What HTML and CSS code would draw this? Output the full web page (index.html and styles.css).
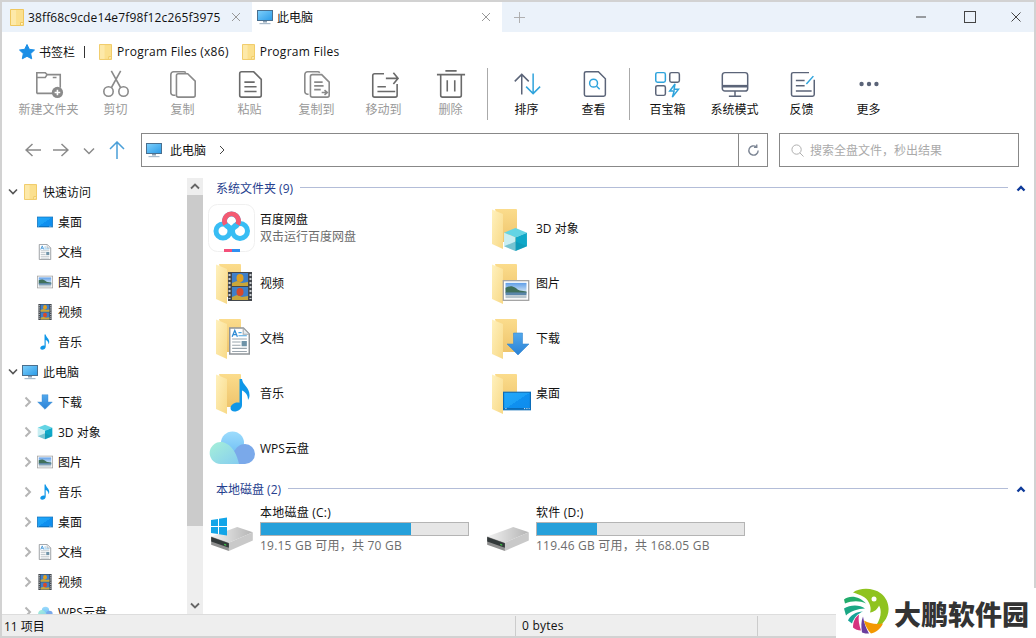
FILE: index.html
```html
<!DOCTYPE html>
<html lang="en">
<head>
    <meta charset="UTF-8">
    <meta name="viewport" content="width=device-width, initial-scale=1.0">
    <title>此电脑</title>
    <link rel="stylesheet" href="styles.css">
</head>
<body>
    <!-- shared icons -->
    <svg class="sprite" xmlns="http://www.w3.org/2000/svg">
        <defs>
            <linearGradient id="g-back" x1="0" y1="0" x2="0" y2="1"><stop offset="0" stop-color="#fbdc8c"/><stop offset="1" stop-color="#eec46c"/></linearGradient>
            <linearGradient id="g-leaf" x1="0" y1="0" x2="1" y2="1"><stop offset="0" stop-color="#fff1bd"/><stop offset="1" stop-color="#f8d987"/></linearGradient>
            <linearGradient id="g-screen" x1="0" y1="0" x2="1" y2="1"><stop offset="0" stop-color="#7fd0fb"/><stop offset="1" stop-color="#2a9be8"/></linearGradient>
            <linearGradient id="g-desk" x1="0" y1="0" x2="1" y2="1"><stop offset="0" stop-color="#22a8fb"/><stop offset=".5" stop-color="#1ba0f6"/><stop offset=".5" stop-color="#0f90f0"/><stop offset="1" stop-color="#0e8cec"/></linearGradient>
            <linearGradient id="g-sky" x1="0" y1="0" x2="0" y2="1"><stop offset="0" stop-color="#5f9ee8"/><stop offset="1" stop-color="#d5e6f4"/></linearGradient>
            <linearGradient id="g-arrow" x1="0" y1="0" x2="0" y2="1"><stop offset="0" stop-color="#52a8ec"/><stop offset="1" stop-color="#2a82d6"/></linearGradient>
            <linearGradient id="g-cloud" x1="0" y1="0" x2="1" y2="1"><stop offset="0" stop-color="#a6f0d8"/><stop offset="1" stop-color="#86cdf0"/></linearGradient>
            <linearGradient id="g-dome" x1="0" y1="0" x2="0" y2="1"><stop offset="0" stop-color="#9ddcfc"/><stop offset="1" stop-color="#6fbff5"/></linearGradient>
            <linearGradient id="g-disk" x1="0" y1="0" x2="1" y2="0"><stop offset="0" stop-color="#f2f2f2"/><stop offset="1" stop-color="#b4b4b4"/></linearGradient>
        </defs>

        <symbol id="i-folder" viewBox="0 0 14 17">
            <path d="M.5.5h13v16H.5z" fill="#fbe08e" stroke="#efc75e"/>
            <path d="M10.500 16.500v-3h3" fill="#fff3c4" stroke="#efc75e"/>
            <path d="M1 1h5v15H1z" fill="#fde9a9"/>
        </symbol>
        <symbol id="i-pc" viewBox="0 0 16 16">
            <rect x=".5" y="1.500" width="15" height="10" fill="url(#g-screen)" stroke="#4a6f8e"/>
            <path d="M6 12h4v1.500H6z" fill="#8b9eb0"/>
            <path d="M2.500 14h11v1.200h-11z" fill="#a9bbcb"/>
        </symbol>
        <symbol id="i-desk" viewBox="0 0 24 16">
            <rect x=".5" y=".5" width="23" height="15" fill="url(#g-desk)" stroke="#0b6cb8"/>
            <path d="M1 14h22v1H1z" fill="#0b6cb8"/>
            <path d="M2 14.500h1M18 14.500h1M20 14.500h1M22 14.500h.8" stroke="#fff" stroke-width=".7"/>
        </symbol>
        <symbol id="i-doc" viewBox="0 0 20 26">
            <path d="M.7.7h13l5.600 5.600v19H.7z" fill="#fff" stroke="#8f9498" stroke-width="1.400"/>
            <path d="M13.500 1v5.500h5.500" fill="#e7ecef" stroke="#a4a9ad"/>
            <path d="M3 9l2.500-6L8 9M4 7h3" fill="none" stroke="#2d8ad4" stroke-width="1.200"/>
            <path d="M9 5h3M9 8h8" stroke="#4aa3dd"/>
            <path d="M3 11h14M3 14h8M3 17h8M3 20h14M3 23h14" stroke="#9aa5ad"/>
            <rect x="12" y="13" width="5" height="5" fill="#6f93a8"/>
        </symbol>
        <symbol id="i-pic" viewBox="0 0 28 22">
            <rect x=".7" y=".7" width="26.600" height="20.600" fill="#fff" stroke="#a5a5a5" stroke-width="1.400"/>
            <rect x="3" y="3" width="22" height="10" fill="url(#g-sky)"/>
            <path d="M3 8c3-1 5-2 8-1 3 .5 4 3 7 4l7 1v2H3z" fill="#3f6f5a"/>
            <rect x="3" y="13" width="22" height="3" fill="#5a86aa"/>
            <rect x="3" y="16" width="22" height="3" fill="#b9c6cd"/>
        </symbol>
        <symbol id="i-film" viewBox="0 0 24 29">
            <rect width="24" height="29" fill="#43474c"/>
            <path d="M1.500 2v25M22.500 2v25" stroke="#c9cdd0" stroke-width="2" stroke-dasharray="2 2"/>
            <rect x="4" y="1" width="16" height="13" fill="#3f7fc8"/>
            <rect x="4" y="15" width="16" height="13" fill="#3f7fc8"/>
            <path d="M4 14v-3l5-2 5 2 6-1v4zM4 28v-3l5-2 5 2 6-1v4z" fill="#c9a63a"/>
            <ellipse cx="12" cy="6" rx="3.500" ry="4" fill="#e0a020"/>
            <ellipse cx="12" cy="20" rx="3.500" ry="4" fill="#d84a2a"/>
        </symbol>
        <symbol id="i-music" viewBox="0 0 20 34">
            <path d="M9 1h2.500c.5 6 7.500 8 7.500 16 0 2-.5 3.500-1.500 5 .2-5-3-8.500-6-9.500V27c0 4-4 6.500-7.500 6.500C1.500 33.500 0 32 0 30c0-3 3.500-5.500 7-5.500.7 0 1.400.1 2 .3z" fill="#0f97e8"/>
        </symbol>
        <symbol id="i-down" viewBox="0 0 24 24">
            <path d="M7.500 1h9v11H23L12 23 1 12h6.500z" fill="url(#g-arrow)" stroke="#3a8ad0" stroke-width=".6"/>
        </symbol>
        <symbol id="i-cube" viewBox="0 0 24 24">
            <path d="M12 1l11 4.500L12 10 1 5.500z" fill="#63d4e4"/>
            <path d="M1 5.500L12 10v13L1 18.500z" fill="#c9eef2"/>
            <path d="M23 5.500L12 10v13l11-4.500z" fill="#0fa8c8"/>
            <path d="M1 18.500L12 14l11 4.500L12 23z" fill="#0f8fa8" opacity=".45"/>
        </symbol>
        <symbol id="i-drive" viewBox="0 0 40 24">
            <path d="M0 9L25 0l15 5-23 10z" fill="url(#g-disk)"/>
            <path d="M17 15L40 5v8L17 23z" fill="#c9c9c9"/>
            <path d="M0 9l17 6v8L0 17z" fill="#8f8f8f"/>
            <path d="M0 9.500l17 6v4.500L0 14z" fill="#33393a"/>
            <path d="M12.500 16l2 .7v1.200l-2-.7z" fill="#3ed04a"/>
        </symbol>
        <symbol id="i-chev" viewBox="0 0 8 12">
            <path d="M1.500 1.500L6 6l-4.500 4.500" fill="none" stroke="#b5b5b5" stroke-width="2"/>
        </symbol>
        <symbol id="i-open" viewBox="0 0 10 8">
            <path d="M1 1.500L5 5.500 9 1.500" fill="none" stroke="#555" stroke-width="1.600"/>
        </symbol>
        <symbol id="i-fold-up" viewBox="0 0 10 8">
            <path d="M1.500 6.500L5 3 8.500 6.500" fill="none" stroke="#0e3a9a" stroke-width="2.400"/>
        </symbol>
        <symbol id="i-big-folder" viewBox="0 0 48 48">
            <path d="M12 5h21a1 1 0 0 1 1 1v32H20z" fill="url(#g-back)"/>
            <path d="M9 5.500L20 10v35L9 40z" fill="url(#g-leaf)"/>
        </symbol>
        <symbol id="i-wps" viewBox="0 0 48 50">
            <circle cx="25.500" cy="20" r="11.500" fill="url(#g-dome)"/>
            <path d="M14 41h24a10 10 0 0 0 0-20c-5 0-8 3-10 6z" fill="#7aa9ea"/>
            <path d="M14 41a11 11 0 1 1 6-20c6 3 10 11 12 20z" fill="url(#g-cloud)"/>
        </symbol>
    </svg>

    <div class="window">
        <div class="tabbar">
            <div class="tab">
                <svg class="tab-icon"><use href="#i-folder"/></svg>
                <span class="tab-name">38ff68c9cde14e7f98f12c265f3975</span>
                <svg class="tab-close" viewBox="0 0 10 10"><path d="M1 1l8 8M9 1l-8 8"/></svg>
            </div>
            <div class="tab active">
                <svg class="tab-icon"><use href="#i-pc"/></svg>
                <span class="tab-name">此电脑</span>
                <svg class="tab-close" viewBox="0 0 10 10"><path d="M1 1l8 8M9 1l-8 8"/></svg>
            </div>
            <svg class="tab-add" viewBox="0 0 12 12"><path d="M6 0v12M0 6h12"/></svg>
            <div class="win-btns">
                <svg viewBox="0 0 12 12"><path d="M1 6h10"/></svg>
                <svg viewBox="0 0 12 12"><rect x=".5" y=".5" width="11" height="11"/></svg>
                <svg viewBox="0 0 12 12"><path d="M1.500 1.500l9 9M10.500 1.500l-9 9"/></svg>
            </div>
        </div>

        <div class="bookmarks">
            <svg class="star" viewBox="0 0 16 16"><path d="M8 .5l2.300 4.800 5.200.7-3.800 3.600 1 5.200L8 12.300l-4.700 2.500 1-5.200L.5 6l5.200-.7z" fill="#1c8fe6" stroke="#1c8fe6" stroke-linejoin="round"/></svg>
            <span class="mark-title">书签栏</span>
            <span class="mark-sep"></span>
            <svg class="mark-folder"><use href="#i-folder"/></svg>
            <span class="mark-name">Program Files (x86)</span>
            <svg class="mark-folder"><use href="#i-folder"/></svg>
            <span class="mark-name">Program Files</span>
        </div>

        <div class="toolbar">
            <div class="tool off">
                <svg viewBox="0 0 32 32"><path d="M3 26V4h9l2 2h14v14M3 26h17M3 9h9l2-3M20 9h4"/><circle cx="25" cy="25" r="6" fill="#8a8a8a" stroke="none"/><path d="M25 22v6M22 25h6" stroke="#fff"/></svg>
                <span>新建文件夹</span>
            </div>
            <div class="tool off">
                <svg viewBox="0 0 32 32"><circle cx="8" cy="24" r="5"/><circle cx="24" cy="24" r="5"/><path d="M11 20L21 2M21 20L11 2"/></svg>
                <span>剪切</span>
            </div>
            <div class="tool off">
                <svg viewBox="0 0 32 32"><path d="M8 28H6a3 3 0 0 1-3-3V6a3 3 0 0 1 3-3h11a3 3 0 0 1 2 1"/><path d="M11 5h10l8 8v15a2 2 0 0 1-2 2H11a2 2 0 0 1-2-2V7a2 2 0 0 1 2-2z"/></svg>
                <span>复制</span>
            </div>
            <div class="tool off dark">
                <svg viewBox="0 0 32 32"><path d="M7 3h13l8 8v17a2 2 0 0 1-2 2H7a2 2 0 0 1-2-2V5a2 2 0 0 1 2-2z"/><path d="M10 14h11M10 19h13M10 24h13"/></svg>
                <span>粘贴</span>
            </div>
            <div class="tool off">
                <svg viewBox="0 0 32 32"><path d="M7 27H6a3 3 0 0 1-3-3V6a3 3 0 0 1 3-3h11a3 3 0 0 1 2 1"/><path d="M11 6h10l8 8v14a2 2 0 0 1-2 2H11a2 2 0 0 1-2-2V8a2 2 0 0 1 2-2z"/><path d="M13 14h9M13 18h10M13 22h7M21 25h5M24 22.500l3 2.500-3 2.500"/></svg>
                <span>复制到</span>
            </div>
            <div class="tool off dark">
                <svg viewBox="0 0 32 32"><path d="M16 5H6a2 2 0 0 0-2 2v21a2 2 0 0 0 2 2h22a2 2 0 0 0 2-2V16"/><path d="M9 19h9M9 24h19M18 10h13M26 4l5 6-5 6"/></svg>
                <span>移动到</span>
            </div>
            <div class="tool off dark">
                <svg viewBox="0 0 32 32"><path d="M1 6h30M10 2h12M5 6v22a2 2 0 0 0 2 2h18a2 2 0 0 0 2-2V6M12 12v12M20 12v12"/></svg>
                <span>删除</span>
            </div>
            <div class="tool-sep"></div>
            <div class="tool">
                <svg viewBox="0 0 32 32"><path d="M10 28V6M2 13l8-8 8 8"/><path d="M23 4v22M15 19l8 8 8-8" stroke="#2ea3dc"/></svg>
                <span>排序</span>
            </div>
            <div class="tool">
                <svg viewBox="0 0 32 32"><path d="M7 2h14l8 8v18a2 2 0 0 1-2 2H7a2 2 0 0 1-2-2V4a2 2 0 0 1 2-2z"/><circle cx="15.500" cy="15" r="4.500" stroke="#2ea3dc"/><path d="M19 18.500l3.500 3.500" stroke="#2ea3dc"/></svg>
                <span>查看</span>
            </div>
            <div class="tool-sep second"></div>
            <div class="tool">
                <svg viewBox="0 0 32 32"><rect x="2" y="3" width="11" height="11" rx="2" stroke="#2ea3dc"/><rect x="18" y="3" width="11" height="11" rx="2"/><rect x="2" y="18" width="11" height="11" rx="2"/><path d="M24 16l-6 8h5l-2 7 7-9h-5z" stroke="#2ea3dc"/></svg>
                <span>百宝箱</span>
            </div>
            <div class="tool">
                <svg viewBox="0 0 32 32"><rect x="1.500" y="3" width="29" height="21" rx="3"/><path d="M2 18.500h28" stroke-width="3"/><path d="M16 24v6M9 30h14"/></svg>
                <span>系统模式</span>
            </div>
            <div class="tool">
                <svg viewBox="0 0 32 32"><path d="M24 3H6a2 2 0 0 0-2 2v23a2 2 0 0 0 2 2h22a2 2 0 0 0 2-2V11"/><path d="M9 12h10M9 18h10M9 24h18"/><path d="M21 16l8-9" stroke="#2ea3dc"/></svg>
                <span>反馈</span>
            </div>
            <div class="tool">
                <svg viewBox="0 0 32 32"><circle cx="7.500" cy="16" r="2.500" class="dot"/><circle cx="16" cy="16" r="2.500" class="dot"/><circle cx="24.500" cy="16" r="2.500" class="dot"/></svg>
                <span>更多</span>
            </div>
        </div>

        <div class="navbar">
            <div class="nav-btns">
                <svg viewBox="0 0 16 14"><path d="M16 7H1M7.500 1L1 7l6.500 6"/></svg>
                <svg viewBox="0 0 16 14"><path d="M0 7h15M8.500 1L15 7l-6.500 6"/></svg>
                <svg class="nav-more" viewBox="0 0 12 8"><path d="M1 1.500L6 6.500 11 1.500"/></svg>
                <svg class="nav-up" viewBox="0 0 16 18"><path d="M8 18V1M1 8l7-7 7 7"/></svg>
            </div>
            <div class="address">
                <svg class="addr-icon"><use href="#i-pc"/></svg>
                <span class="addr-name">此电脑</span>
                <svg class="addr-next" viewBox="0 0 6 10"><path d="M1 1l4 4-4 4"/></svg>
                <div class="addr-refresh">
                    <svg viewBox="0 0 14 14"><path d="M12 7a5 5 0 1 1-2-4"/><path d="M10.500 .5V3.500H7.500"/></svg>
                </div>
            </div>
            <div class="search">
                <svg viewBox="0 0 14 14"><circle cx="6" cy="6" r="5"/><path d="M9.500 9.500L13.500 13.500"/></svg>
                <span>搜索全盘文件，秒出结果</span>
            </div>
        </div>

        <div class="main">
            <div class="tree">
                <div class="tree-row"><svg class="caret-open"><use href="#i-open"/></svg><svg class="tree-icon"><use href="#i-folder" x="2" width="13" height="16"/></svg><span>快速访问</span></div>
                <div class="tree-row child"><span class="caret-gap"></span><svg class="tree-icon"><use href="#i-desk"/></svg><span>桌面</span></div>
                <div class="tree-row child"><span class="caret-gap"></span><svg class="tree-icon"><use href="#i-doc"/></svg><span>文档</span></div>
                <div class="tree-row child"><span class="caret-gap"></span><svg class="tree-icon"><use href="#i-pic"/></svg><span>图片</span></div>
                <div class="tree-row child"><span class="caret-gap"></span><svg class="tree-icon"><use href="#i-film"/></svg><span>视频</span></div>
                <div class="tree-row child"><span class="caret-gap"></span><svg class="tree-icon"><use href="#i-music"/></svg><span>音乐</span></div>
                <div class="tree-row"><svg class="caret-open"><use href="#i-open"/></svg><svg class="tree-icon"><use href="#i-pc"/></svg><span>此电脑</span></div>
                <div class="tree-row child"><svg class="caret"><use href="#i-chev"/></svg><svg class="tree-icon"><use href="#i-down"/></svg><span>下载</span></div>
                <div class="tree-row child"><svg class="caret"><use href="#i-chev"/></svg><svg class="tree-icon"><use href="#i-cube"/></svg><span>3D 对象</span></div>
                <div class="tree-row child"><svg class="caret"><use href="#i-chev"/></svg><svg class="tree-icon"><use href="#i-pic"/></svg><span>图片</span></div>
                <div class="tree-row child"><svg class="caret"><use href="#i-chev"/></svg><svg class="tree-icon"><use href="#i-music"/></svg><span>音乐</span></div>
                <div class="tree-row child"><svg class="caret"><use href="#i-chev"/></svg><svg class="tree-icon"><use href="#i-desk"/></svg><span>桌面</span></div>
                <div class="tree-row child"><svg class="caret"><use href="#i-chev"/></svg><svg class="tree-icon"><use href="#i-doc"/></svg><span>文档</span></div>
                <div class="tree-row child"><svg class="caret"><use href="#i-chev"/></svg><svg class="tree-icon"><use href="#i-film"/></svg><span>视频</span></div>
                <div class="tree-row child"><svg class="caret"><use href="#i-chev"/></svg><svg class="tree-icon"><use href="#i-wps"/></svg><span>WPS云盘</span></div>
            </div>

            <div class="scrollbar">
                <svg class="sb-arrow" viewBox="0 0 10 8"><path d="M1 6l4-4 4 4"/></svg>
                <div class="sb-thumb"></div>
                <svg class="sb-arrow" viewBox="0 0 10 8"><path d="M1 2l4 4 4-4"/></svg>
            </div>

            <div class="content">
                <div class="group-head"><span>系统文件夹 (9)</span><i></i><svg><use href="#i-fold-up"/></svg></div>
                <div class="items">
                    <div class="item">
                        <svg class="item-icon" viewBox="0 0 48 50">
                            <rect x="1.500" y="1.500" width="46" height="47" rx="9" fill="#fff" stroke="#f0f0f0"/>
                            <circle cx="16" cy="28" r="7" fill="none" stroke="#38bdf4" stroke-width="5"/>
                            <circle cx="33" cy="28" r="7.500" fill="none" stroke="#38bdf4" stroke-width="5"/>
                            <circle cx="24.500" cy="18" r="7" fill="none" stroke="#38bdf4" stroke-width="5"/>
                            <path d="M18.500 21.500a7 7 0 1 1 12 0" fill="none" stroke="#f45a72" stroke-width="5"/>
                            <path d="M17 46h8v3h-8z" fill="#f4507a"/>
                            <path d="M25 46h8v3h-8z" fill="#2f8ff0"/>
                        </svg>
                        <div class="item-text two"><span>百度网盘</span><span class="sub">双击运行百度网盘</span></div>
                    </div>
                    <div class="item">
                        <svg class="item-icon" viewBox="0 0 48 50"><use href="#i-big-folder" y="1" width="48" height="48"/><use href="#i-cube" x="20" y="24" width="25" height="25"/></svg>
                        <div class="item-text"><span>3D 对象</span></div>
                    </div>
                    <div class="item">
                        <svg class="item-icon" viewBox="0 0 48 50"><use href="#i-big-folder" y="1" width="48" height="48"/><use href="#i-film" x="21" y="14" width="24" height="29"/></svg>
                        <div class="item-text"><span>视频</span></div>
                    </div>
                    <div class="item">
                        <svg class="item-icon" viewBox="0 0 48 50"><use href="#i-big-folder" y="1" width="48" height="48"/><use href="#i-pic" x="19" y="22" width="28" height="21"/></svg>
                        <div class="item-text"><span>图片</span></div>
                    </div>
                    <div class="item">
                        <svg class="item-icon" viewBox="0 0 48 50"><use href="#i-big-folder" y="1" width="48" height="48"/><use href="#i-doc" x="22" y="14" width="21" height="28"/></svg>
                        <div class="item-text"><span>文档</span></div>
                    </div>
                    <div class="item">
                        <svg class="item-icon" viewBox="0 0 48 50"><use href="#i-big-folder" y="1" width="48" height="48"/><use href="#i-down" x="23" y="19" width="24" height="24"/></svg>
                        <div class="item-text"><span>下载</span></div>
                    </div>
                    <div class="item">
                        <svg class="item-icon" viewBox="0 0 48 50"><use href="#i-big-folder" y="1" width="48" height="48"/><use href="#i-music" x="23" y="10" width="21" height="34"/></svg>
                        <div class="item-text"><span>音乐</span></div>
                    </div>
                    <div class="item">
                        <svg class="item-icon" viewBox="0 0 48 50"><use href="#i-big-folder" y="1" width="48" height="48"/><use href="#i-desk" x="20" y="23" width="28" height="20"/></svg>
                        <div class="item-text"><span>桌面</span></div>
                    </div>
                    <div class="item">
                        <svg class="item-icon" viewBox="0 0 48 50"><use href="#i-wps"/></svg>
                        <div class="item-text"><span>WPS云盘</span></div>
                    </div>
                </div>

                <div class="group-head second"><span>本地磁盘 (2)</span><i></i><svg><use href="#i-fold-up"/></svg></div>
                <div class="items">
                    <div class="drive">
                        <svg class="item-icon" viewBox="0 0 48 50">
                            <use href="#i-drive" x="4" y="23" width="42" height="25"/>
                            <path d="M4 16l7-1v7H4zM12 14.800l8-1.300v8.500h-8zM4 23h7v7l-7-1zM12 23h8v8.500l-8-1.300z" fill="#12a5e8"/>
                        </svg>
                        <div class="drive-text">
                            <span>本地磁盘 (C:)</span>
                            <div class="meter"><div class="meter-fill" style="width: 72.6%"></div></div>
                            <span class="sub">19.15 GB 可用，共 70 GB</span>
                        </div>
                    </div>
                    <div class="drive">
                        <svg class="item-icon" viewBox="0 0 48 50"><use href="#i-drive" x="4" y="23" width="42" height="25"/></svg>
                        <div class="drive-text">
                            <span>软件 (D:)</span>
                            <div class="meter"><div class="meter-fill" style="width: 28.9%"></div></div>
                            <span class="sub">119.46 GB 可用，共 168.05 GB</span>
                        </div>
                    </div>
                </div>
            </div>
        </div>

        <div class="statusbar">
            <span class="st-count">11 项目</span>
            <span class="st-size">0 bytes</span>
            <span class="st-rest"></span>
        </div>
    </div>

    <div class="watermark">
        <svg viewBox="7 3.500 47 50">
            <path d="M17 8C24 3 37 3 45 9C54 16 55 29 48 37C46 40 43 41 40 41C45 34 46 26 43 21C42 24 38 28 34 28C36 23 33 15 27 12C24 10 20 9 17 8Z" fill="#8fc31f"/>
            <circle cx="38" cy="14.500" r="2.500" fill="#fff"/>
            <path d="M8 15C14 10 24 12 30 19C24 16 16 16 9 19Z" fill="#22ac6c"/>
            <path d="M8 24C14 20 24 20 29 24C22 24 14 27 10 31Z" fill="#1ba784"/>
            <path d="M12 36C14 31 20 27 27 27C22 29 18 33 16 39Z" fill="#17a398"/>
            <path d="M17 43C17 37 19 33 23 30C22 35 23 40 25 46C22 46 19 45 17 43Z" fill="#d6337f"/>
            <path d="M26 48C25 42 25 37 27 32C28 38 30 44 33 49C31 49 28 49 26 48Z" fill="#6a3e9e"/>
            <path d="M28 36C33 39 40 40 47 39C45 44 40 48 35 49C32 46 29 41 28 36Z" fill="#f39800"/>
        </svg>
        <span>大鹏软件园</span>
    </div>
</body>
</html>
```

FILE: styles.css
```css
* {
    margin: 0;
    padding: 0;
    box-sizing: border-box;
}

html, body {
    height: 100%;
}

body {
    font-family: "Open Sans", "Noto Sans CJK SC", sans-serif;
    font-size: 12px;
    color: #111;
    background: white;
    overflow: hidden;
}

.sprite {
    display: block;
    width: 0;
    height: 0;
    overflow: hidden;
}

.window {
    height: 638px;
    display: flex;
    flex-direction: column;
    border: 2px solid #d2d2d2;
}

/* tabs */
.tabbar {
    height: 30px;
    flex: none;
    display: flex;
    align-items: center;
    background: #ebf2fa;
}

.tab {
    width: 250px;
    height: 30px;
    display: flex;
    align-items: center;
    padding-left: 8px;
}

.tab.active {
    background: white;
    padding-left: 5px;
}

.tab-icon {
    width: 14px;
    height: 17px;
    flex: none;
}

.tab.active .tab-icon {
    width: 16px;
    height: 16px;
    margin-right: 4px;
}

.tab-name {
    margin-left: 4px;
    flex: 1;
    white-space: nowrap;
    letter-spacing: .13px;
}

.tab.active .tab-name {
    margin-left: 0;
    letter-spacing: 0;
}

.tab-close {
    width: 10px;
    height: 10px;
    margin-right: 11px;
    fill: none;
    stroke: #999;
}

.tab-add {
    width: 11px;
    height: 11px;
    margin-left: 12px;
    fill: none;
    stroke: #aaa;
}

.win-btns {
    margin-left: auto;
    display: flex;
    align-items: center;
    gap: 37px;
    padding-right: 12px;
}

.win-btns svg {
    width: 12px;
    height: 12px;
    fill: none;
    stroke: #444;
}

.win-btns svg:last-child {
    margin-left: -3px;
}

/* bookmarks */
.bookmarks {
    height: 36px;
    flex: none;
    display: flex;
    align-items: center;
    padding: 3px 0 0 17px;
}

.star {
    width: 16px;
    height: 16px;
    margin-right: 4px;
}

.mark-title {
    width: 36px;
}

.mark-sep {
    width: 1px;
    height: 12px;
    background: #333;
    margin: 0 14px 0 9px;
}

.mark-folder {
    width: 13px;
    height: 16px;
    margin-right: 5px;
}

.mark-name {
    margin-right: 13px;
    letter-spacing: .27px;
}

/* toolbar */
.toolbar {
    height: 54px;
    flex: none;
    display: flex;
    padding-left: 13px;
}

.tool {
    width: 67px;
    flex: none;
    display: flex;
    flex-direction: column;
    align-items: center;
}

.tool svg {
    width: 28px;
    height: 28px;
    margin-top: 2px;
    fill: none;
    stroke: #5b6478;
    stroke-width: 1.7;
}

.tool .dot {
    fill: #5b6478;
    stroke: none;
}

.tool span {
    margin-top: 2px;
    line-height: 20px;
    white-space: nowrap;
}

.tool.off svg {
    width: 30px;
    height: 30px;
    margin-top: 1px;
    stroke: #8a8a8a;
}

.tool.off.dark svg {
    stroke: #6a6a6a;
}

.tool.off span {
    margin-top: 1px;
    color: #999;
}

.tool-sep {
    width: 1px;
    height: 52px;
    flex: none;
    background: #aaa;
    margin: 0 5px 0 3px;
}

.tool-sep.second {
    margin: 0 4px 0 2px;
}

/* nav + address */
.navbar {
    height: 45px;
    flex: none;
    display: flex;
    align-items: center;
    padding-top: 11px;
}

.nav-btns {
    width: 139px;
    flex: none;
    display: flex;
    align-items: center;
    padding-left: 23px;
}

.nav-btns svg {
    width: 16px;
    height: 14px;
    margin-right: 12px;
    fill: none;
    stroke: #8a8a8a;
    stroke-width: 1.500;
}

.nav-btns .nav-more {
    width: 12px;
    height: 8px;
    margin: 2px 14px 0 2px;
}

.nav-btns .nav-up {
    width: 16px;
    height: 18px;
    stroke: #4a9fd8;
    margin: 0;
}

.address {
    width: 627px;
    height: 34px;
    flex: none;
    display: flex;
    align-items: center;
    border: 1px solid #888;
    padding-left: 4px;
}

.addr-icon {
    width: 16px;
    height: 16px;
    margin-right: 8px;
}

.addr-name {
    width: 36px;
}

.addr-next {
    width: 6px;
    height: 10px;
    margin-left: 13px;
    fill: none;
    stroke: #444;
}

.addr-refresh {
    width: 29px;
    height: 100%;
    margin-left: auto;
    display: flex;
    align-items: center;
    justify-content: center;
    border-left: 1px solid #888;
}

.addr-refresh svg {
    width: 13px;
    height: 13px;
    fill: none;
    stroke: #7c8594;
    stroke-width: 1.500;
}

.search {
    width: 240px;
    height: 34px;
    margin-left: 11px;
    flex: none;
    display: flex;
    align-items: center;
    gap: 6px;
    border: 1px solid #888;
    padding-left: 11px;
    color: #aaa;
}

.search svg {
    width: 13px;
    height: 13px;
    fill: none;
    stroke: #aaa;
}

/* main area */
.main {
    flex: 1;
    min-height: 0;
    display: flex;
    padding-top: 9px;
}

.tree {
    width: 185px;
    flex: none;
    overflow: hidden;
    padding-top: 1px;
}

.tree-row {
    height: 30px;
    display: flex;
    align-items: center;
    padding-left: 6px;
}

.tree-row.child {
    padding-left: 22px;
}

.caret-open {
    width: 10px;
    height: 8px;
    margin-right: 4px;
    flex: none;
}

.caret, .caret-gap {
    width: 8px;
    height: 12px;
    margin-right: 5px;
    flex: none;
}

.tree-icon {
    width: 16px;
    height: 16px;
    margin-right: 5px;
    flex: none;
}

.tree-row span:last-child {
    white-space: nowrap;
}

.scrollbar {
    width: 16px;
    flex: none;
    display: flex;
    flex-direction: column;
    align-items: center;
    margin-top: 2px;
    background: #eee;
}

.sb-arrow {
    width: 10px;
    height: 17px;
    flex: none;
    fill: none;
    stroke: #666;
    stroke-width: 1.800;
}

.sb-thumb {
    width: 100%;
    height: 331px;
    margin-bottom: auto;
    background: #cbcbcb;
}

.content {
    flex: 1;
    min-width: 0;
    padding-left: 4px;
}

.group-head {
    height: 23px;
    margin-bottom: 2px;
    display: flex;
    align-items: center;
    padding: 0 8px 0 9px;
    color: #26408e;
}

.group-head.second {
    margin: 1px 0 0;
}

.group-head i {
    flex: 1;
    height: 1px;
    margin: 0 8px 0 7px;
    background: #b3bdd8;
}

.group-head svg {
    width: 10px;
    height: 8px;
}

.items {
    display: grid;
    grid-template-columns: repeat(2, 276px);
}

.item {
    height: 55px;
    display: flex;
    align-items: center;
    gap: 5px;
}

.item-icon {
    width: 48px;
    height: 50px;
    flex: none;
}

.item .item-icon {
    margin-bottom: 1px;
}

.item-text {
    display: flex;
    flex-direction: column;
    line-height: 17px;
}

.item-text.two {
    margin-bottom: 2px;
}

.sub {
    color: #6d6d6d;
}

.drive {
    height: 52px;
    margin-top: 3px;
    display: flex;
    align-items: center;
    gap: 5px;
}

.drive-text {
    width: 209px;
    display: flex;
    flex-direction: column;
    line-height: 17px;
}

.drive-text span {
    white-space: nowrap;
    letter-spacing: .22px;
}

.meter {
    height: 14px;
    margin: 1px 0;
    border: 1px solid #b4b4b4;
    background: #e6e6e6;
}

.meter-fill {
    height: 100%;
    background: #26a0da;
}

/* status */
.statusbar {
    height: 22px;
    flex: none;
    display: flex;
    align-items: center;
    background: #eee;
    border-top: 1px solid #ddd;
}

.st-count {
    width: 513px;
    padding-left: 2px;
}

.st-size {
    width: 242px;
    padding-left: 6px;
    border-left: 1px solid #ccc;
    line-height: 20px;
    letter-spacing: .25px;
}

.st-rest {
    height: 20px;
    border-left: 1px solid #ccc;
}

.watermark {
    position: absolute;
    right: 0;
    bottom: 0;
    width: 200px;
    height: 50px;
    display: flex;
    align-items: center;
    gap: 4px;
    padding-left: 7px;
    background: white;
}

.watermark svg {
    width: 47px;
    height: 50px;
    flex: none;
}

.watermark span {
    font-size: 27px;
    font-weight: 900;
    color: #333;
    white-space: nowrap;
}
```
